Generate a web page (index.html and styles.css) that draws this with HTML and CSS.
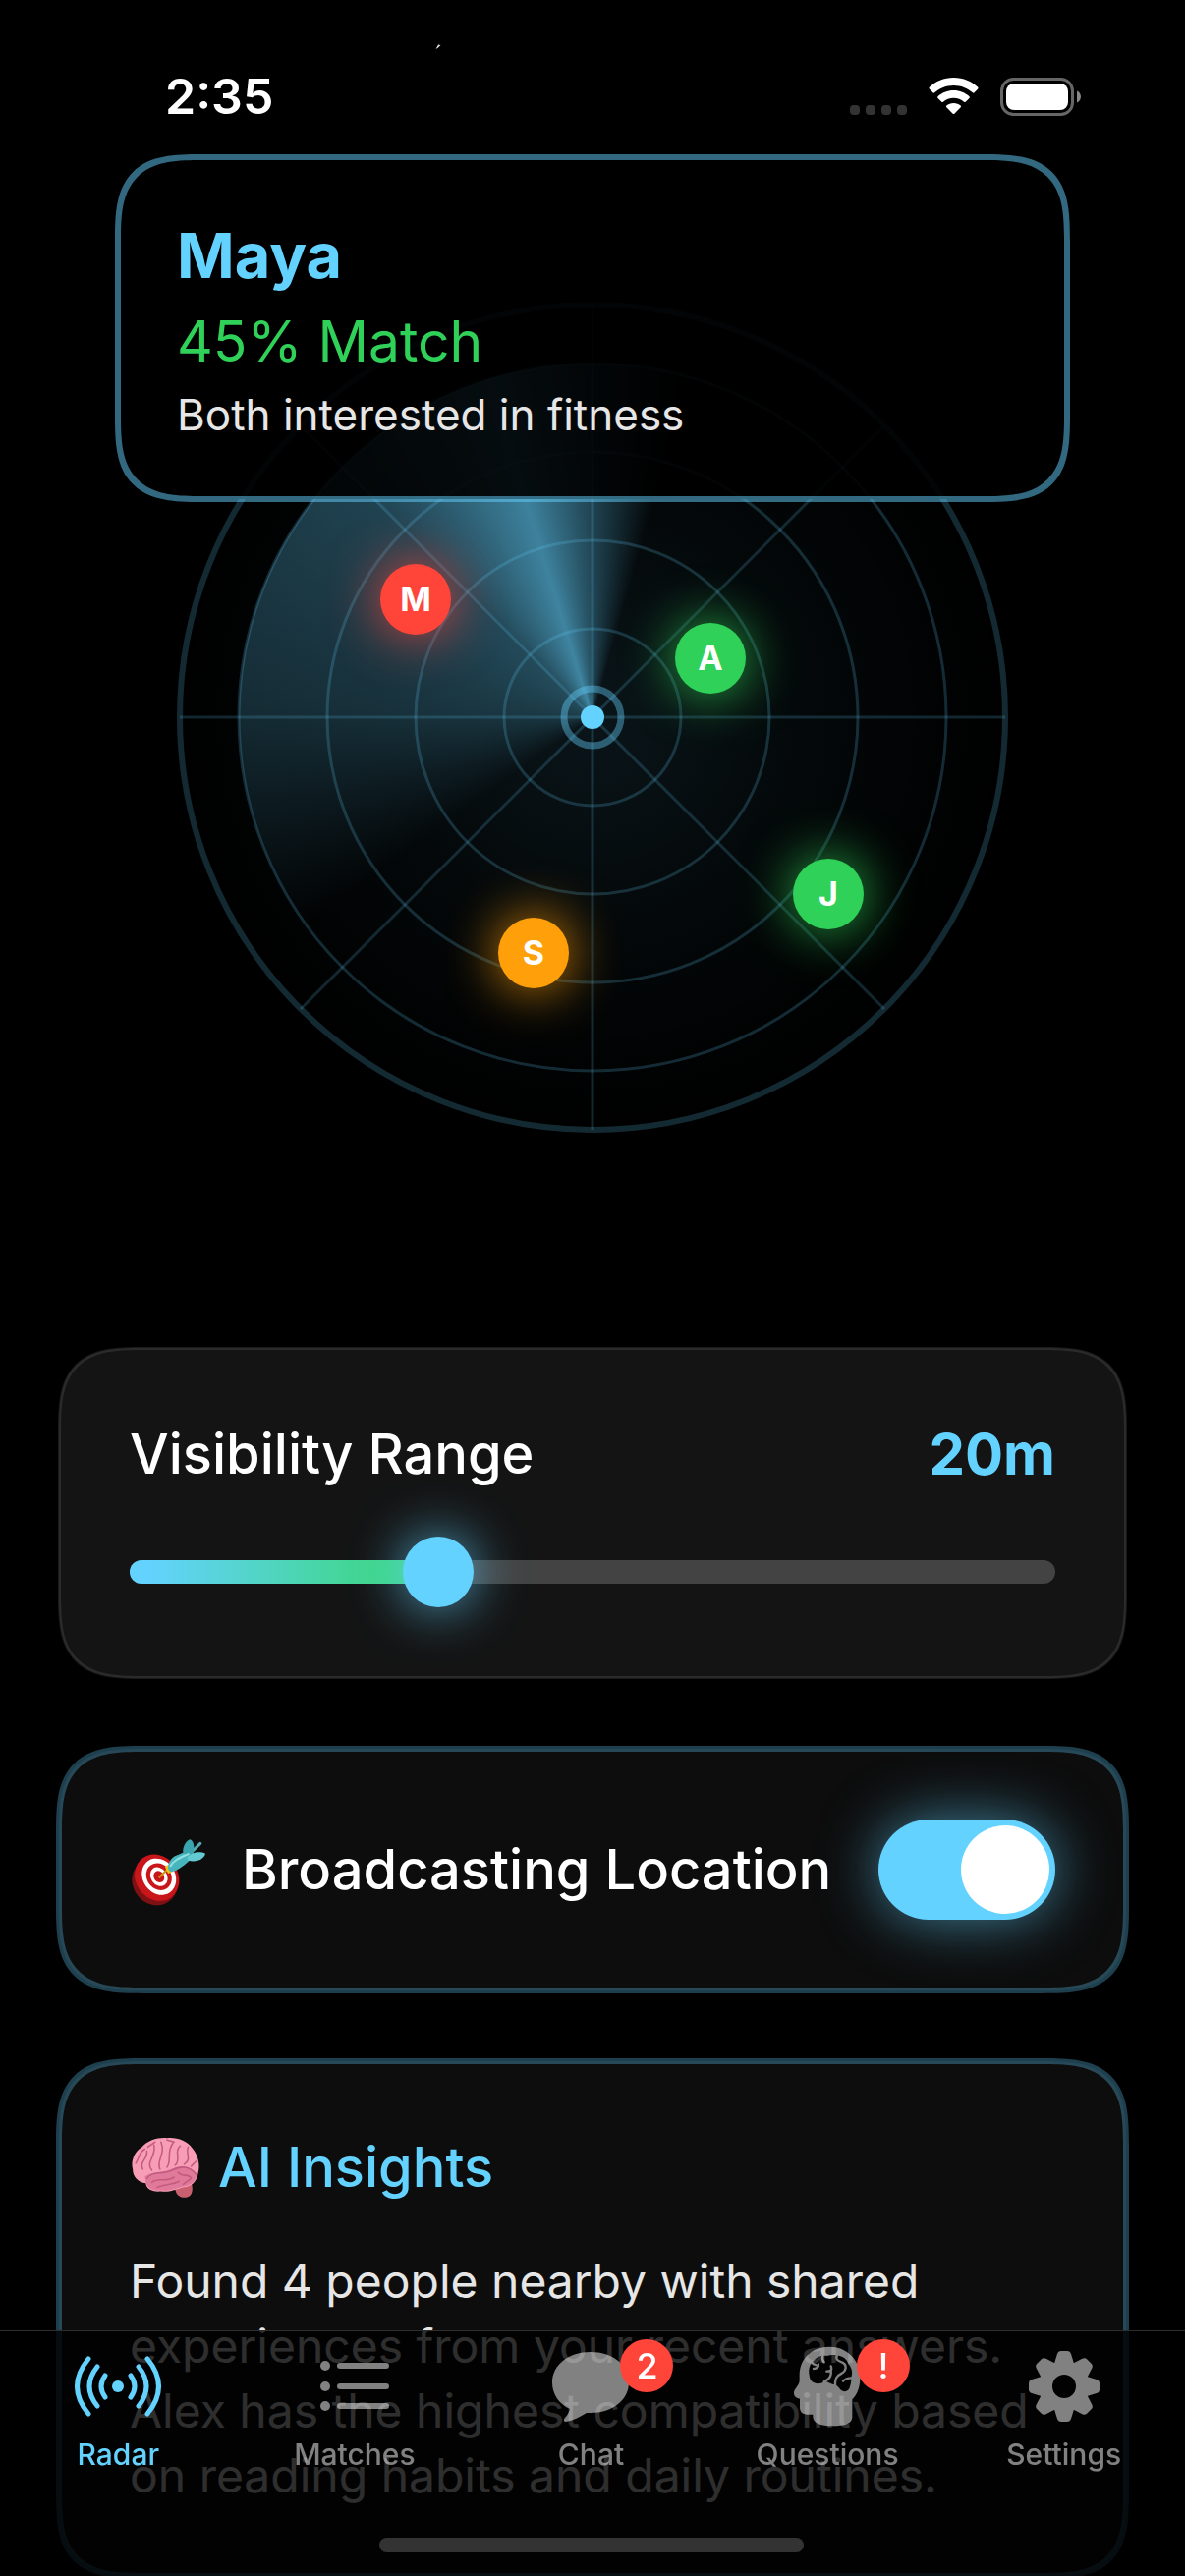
FILE: index.html
```html
<!DOCTYPE html>
<html lang="en">
<head>
<meta charset="utf-8">
<meta name="viewport" content="width=device-width, initial-scale=1">
<title>Radar</title>
<link rel="stylesheet" href="styles.css">
</head>
<body>
<header class="status-bar">
  <span class="status-time">2:35</span>
  <svg class="status-mark" viewBox="0 0 6 6" aria-hidden="true"><path d="M3 .5 5.500 1 3 3.500 .5 5Z" fill="#ddd"/></svg>
  <div class="status-icons" aria-hidden="true">
    <svg width="58" height="38" viewBox="0 0 58 38" fill="#333"><rect y="28" width="10" height="10" rx="4"/><rect x="16" y="28" width="10" height="10" rx="4"/><rect x="32" y="28" width="10" height="10" rx="4"/><rect x="48" y="28" width="10" height="10" rx="4"/></svg>
    <svg width="51" height="38" viewBox="0 0 51 38" fill="#fff"><path d="M25.500 0C35.500 0 44 3.800 50.200 9.800Q51 10.700 50.200 11.600L46.300 15.400Q45.600 16 44.800 15.300C39.600 10.600 33 7.900 25.500 7.900S11.400 10.600 6.200 15.300Q5.400 16 4.700 15.400L.8 11.600Q0 10.700.8 9.800C7 3.800 15.500 0 25.500 0Z"/><path d="M25.500 13C31.800 13 37.300 15.400 41.500 19.200Q42.300 20 41.500 20.900L37.600 24.700Q36.900 25.400 36.100 24.700C33.200 22.200 29.600 20.800 25.500 20.800S17.800 22.200 14.900 24.700Q14.100 25.400 13.400 24.700L9.500 20.900Q8.700 20 9.500 19.200C13.700 15.400 19.200 13 25.500 13Z"/><path d="M25.500 26C28.300 26 30.800 27 32.700 28.600Q33.500 29.400 32.700 30.200L26.300 36.700Q25.500 37.500 24.700 36.700L18.300 30.200Q17.500 29.400 18.300 28.600C20.200 27 22.700 26 25.500 26Z"/></svg>
    <svg width="82" height="39" viewBox="0 0 82 39"><rect x="1.500" y="1.500" width="72" height="36" rx="12" fill="none" stroke="#666" stroke-width="3"/><rect x="6" y="6" width="63" height="27" rx="8" fill="#fff"/><path d="M78 13.500C83.300 15.500 83.300 23.500 78 25.500Z" fill="#888"/></svg>
  </div>
</header>

<main class="screen">
  <section class="radar-area">
    <div class="radar">
      <div class="radar-sweep"></div>
      <svg class="radar-grid" viewBox="-423 -423 846 846" fill="none" stroke="#64d2ff" aria-hidden="true">
        <g stroke-width="3" stroke-opacity=".2">
          <circle r="90"/><circle r="180"/><circle r="270"/><circle r="360"/>
          <path d="M0-420V420M-420 0H420M-297-297 297 297M-297 297 297-297" stroke-opacity=".18"/>
        </g>
        <circle r="420" stroke-width="6" stroke-opacity=".2"/>
        <circle r="29" stroke-width="7" stroke-opacity=".4"/>
        <circle r="12" fill="#64d2ff" stroke="none"/>
      </svg>
      <button class="person person-low maya">M</button>
      <button class="person person-high alex">A</button>
      <button class="person person-high jordan">J</button>
      <button class="person person-mid sam">S</button>
    </div>
    <article class="match-card">
      <h2 class="match-name">Maya</h2>
      <p class="match-score">45% Match</p>
      <p class="match-reason">Both interested in fitness</p>
    </article>
  </section>

  <section class="card range-card">
    <div class="range-head">
      <label class="card-title" for="range">Visibility Range</label>
      <output class="range-value" for="range">20m</output>
    </div>
    <div class="slider">
      <div class="slider-track"><div class="slider-fill"></div></div>
      <input class="slider-input" id="range" type="range" min="5" max="50" value="20">
    </div>
  </section>

  <section class="card card-accent broadcast-card">
    <svg class="emoji" viewBox="0 0 76 76" aria-hidden="true">
      <ellipse cx="25" cy="50" rx="22" ry="24" transform="rotate(-35 25 50)" fill="#7f1014"/>
      <ellipse cx="27" cy="46" rx="21" ry="24" transform="rotate(-35 27 46)" fill="#c9161b"/>
      <ellipse cx="29" cy="45" rx="16" ry="19" transform="rotate(-35 29 45)" fill="#fff"/>
      <ellipse cx="29" cy="45" rx="12" ry="14" transform="rotate(-35 29 45)" fill="#c9161b"/>
      <ellipse cx="29" cy="45" rx="8" ry="10" transform="rotate(-35 29 45)" fill="#fff"/>
      <ellipse cx="29" cy="45" rx="5" ry="6" transform="rotate(-35 29 45)" fill="#c9161b"/>
      <path d="M29 46 39 36" stroke="#c99a12" stroke-width="2"/>
      <path d="M35 35 38 42 43 40 39 33Z" fill="#f2c21b"/>
      <path d="M62 20 70 12" stroke="#58aab0" stroke-width="3" stroke-linecap="round"/>
      <path d="M38 37C38 30 42 25 49 23L60 18 65 24 56 32C50 37 43 41 40 40Z" fill="#48b5bd"/>
      <path d="M53 22C52 15 56 9 60 8 65 11 64 18 62 24Z" fill="#3aa5ae"/>
      <path d="M57 26C62 20 70 20 75 22 74 28 66 31 58 29Z" fill="#62cad0"/>
      <path d="M40 35C44 28 51 26 59 22" stroke="#8fe0e4" stroke-width="2" fill="none"/>
    </svg>
    <label class="card-title broadcast-label" for="broadcast">Broadcasting Location</label>
    <input class="switch" id="broadcast" type="checkbox" role="switch" checked>
  </section>

  <section class="card card-accent insights-card">
    <h2 class="card-title insights-title">
      <svg class="emoji" viewBox="0 0 76 76" aria-hidden="true">
        <path d="M45 55C45 62 50 66 56 65 63 64 63 56 61 50L48 50Z" fill="#c9606f"/>
        <path d="M3 37C1 29 4 20 12 15 18 8 29 5 37 6 47 5 57 9 62 16 68 23 70 33 68 40 67 49 61 55 53 55 45 57 40 60 31 59 22 60 16 56 16 51 8 50 3 44 3 37Z" fill="#f79db6"/>
        <path d="M15 44C24 38 34 41 43 36 53 32 62 36 67 42 65 50 60 54 53 54 45 56 40 59 31 58 22 59 17 55 16 50Z" fill="#e07a9b"/>
        <g fill="none" stroke="#c45a80" stroke-width="1.500" stroke-linecap="round">
          <path d="M17 46C23 38 32 43 42 38S59 34 66 42"/><path d="M6 31C10 25 9 20 15 17M13 37C9 30 18 27 17 19M22 38C15 30 27 24 24 13M30 37C26 28 36 22 31 10M37 35C42 28 36 20 43 11M45 33C52 27 43 20 50 14M54 32C62 28 55 20 58 15M61 34 66 29M25 10 18 15M37 8 44 10"/><path d="M22 50C29 44 36 51 44 45M27 55C36 51 42 53 49 49M48 40C53 46 58 40 61 46M53 52 60 47"/>
        </g>
      </svg>
      <span>AI Insights</span>
    </h2>
    <p class="insights-text">Found 4 people nearby with shared experiences from your recent answers. Alex has the highest compatibility based on reading habits and daily routines.</p>
  </section>
</main>

<nav class="tab-bar">
  <a class="tab tab-active" href="#radar">
    <span class="tab-icon">
      <svg width="90" height="82" viewBox="-45 -41 90 82" fill="none" stroke="currentColor" stroke-width="5" stroke-linecap="round">
        <circle r="6" fill="currentColor" stroke="none"/>
        <path d="M-13-11Q-21 0-13 11M13-11Q21 0 13 11M-21-20Q-37 0-21 20M21-20Q37 0 21 20M-30-28Q-53 0-30 28M30-28Q53 0 30 28"/>
      </svg>
    </span>
    <span class="tab-label">Radar</span>
  </a>
  <a class="tab" href="#matches">
    <span class="tab-icon">
      <svg width="70" height="82" viewBox="0 0 70 82" fill="currentColor">
        <circle cx="5" cy="20" r="5"/><circle cx="5" cy="41" r="5"/><circle cx="5" cy="61" r="5"/>
        <rect x="17" y="17" width="53" height="6" rx="3"/><rect x="17" y="38" width="53" height="6" rx="3"/><rect x="17" y="58" width="53" height="6" rx="3"/>
      </svg>
    </span>
    <span class="tab-label">Matches</span>
  </a>
  <a class="tab" href="#chat">
    <span class="tab-icon">
      <svg width="78" height="82" viewBox="0 0 78 82" fill="currentColor"><path d="M39 6C61 6 78 19 78 37S61 68 39 68L35 68C28 72 21 76 14 77 12 77 11 75 13 73 15 71 17 68 18 64 7 59 0 49 0 37 0 19 17 6 39 6Z"/></svg>
      <span class="badge">2</span>
    </span>
    <span class="tab-label">Chat</span>
  </a>
  <a class="tab" href="#questions">
    <span class="tab-icon">
      <svg width="68" height="82" viewBox="90 53 204 246">
        <mask id="head-mask" maskUnits="userSpaceOnUse" x="80" y="50" width="220" height="250">
          <rect x="80" y="50" width="220" height="250" fill="#fff"/>
          <path d="M137 142C133 125 138 108 150 98 160 84 178 80 190 83 205 78 222 80 232 84 245 87 254 98 256 108 267 118 270 135 265 148 266 162 262 176 258 184 252 194 238 193 232 186 227 180 224 174 215 171 205 170 195 162 185 160 175 169 155 170 146 162 140 157 138 150 137 142Z" fill="#000"/>
          <g fill="none" stroke="#fff" stroke-width="7" stroke-linecap="round"><path d="M146 104C150 112 155 108 160 112M150 122C160 122 166 116 165 108M178 84C176 92 178 98 182 102M203 114C208 128 200 130 190 130M203 127C206 150 192 156 182 162M222 80C216 96 226 98 236 102 254 110 250 128 236 136 220 144 214 154 216 176M268 150C256 150 246 152 240 160"/></g>
        </mask>
        <path mask="url(#head-mask)" fill="currentColor" d="M107 140C108 88 148 55 198 55 252 55 292 95 292 148 292 178 284 200 268 216V270C268 290 245 297 208 297 170 297 148 288 148 268V262H132C115 262 108 254 108 240V214C96 212 89 206 90 194 92 182 107 172 107 158Z"/>
      </svg>
      <span class="badge">!</span>
    </span>
    <span class="tab-label">Questions</span>
  </a>
  <a class="tab" href="#settings">
    <span class="tab-icon">
      <svg width="72" height="82" viewBox="-36 -41 72 82">
        <mask id="gear-mask" maskUnits="userSpaceOnUse" x="-40" y="-40" width="80" height="80">
          <g fill="#fff">
            <circle r="26"/>
            <path id="tooth" d="M-11-20-7-33Q-6-36-3-36H3Q6-36 7-33L11-20Z"/>
            <use href="#tooth" transform="rotate(45)"/><use href="#tooth" transform="rotate(90)"/><use href="#tooth" transform="rotate(135)"/><use href="#tooth" transform="rotate(180)"/><use href="#tooth" transform="rotate(225)"/><use href="#tooth" transform="rotate(270)"/><use href="#tooth" transform="rotate(315)"/>
          </g>
          <circle r="12" fill="#000"/>
        </mask>
        <rect x="-36" y="-36" width="72" height="72" fill="currentColor" mask="url(#gear-mask)"/>
      </svg>
    </span>
    <span class="tab-label">Settings</span>
  </a>
  <div class="home-indicator"></div>
</nav>
</body>
</html>
```
FILE: styles.css
```css
:root {
  --accent: #64d2ff;
  --green: #30d158;
  --orange: #ff9f0a;
  --red: #ff453a;
}

* {
  box-sizing: border-box;
}

body {
  margin: 0;
  background: #000;
  color: #fff;
  font-family: Inter, "Liberation Sans", sans-serif;
}

h2,
p {
  margin: 0;
}

svg {
  display: block;
}

/* Status bar */
.status-bar {
  position: relative;
  display: flex;
  align-items: center;
  justify-content: space-between;
  height: 160px;
  padding: 68px 106px 32px 168px;
}

.status-time {
  font-size: 50px;
  font-weight: 600;
  line-height: 60px;
}

.status-mark {
  position: absolute;
  top: 45px;
  left: 443px;
  width: 6px;
  height: 6px;
}

.status-icons {
  display: flex;
  align-items: center;
  gap: 22px;
}

/* Radar */
.screen {
  padding: 0 60px;
}

.radar-area {
  position: relative;
  padding: 147px 0 219px;
}

.radar {
  position: relative;
  width: 846px;
  max-width: 100%;
  aspect-ratio: 1;
  margin: 0 auto;
  border-radius: 50%;
  background: radial-gradient(closest-side, rgba(100, 210, 255, .1), rgba(100, 210, 255, .04) 50%, transparent);
}

.radar-sweep {
  position: absolute;
  inset: 63px;
  border-radius: 50%;
  background: conic-gradient(from 234deg,
    transparent,
    rgba(100, 210, 255, .2) 38deg,
    rgba(100, 210, 255, .3) 80deg,
    rgba(100, 210, 255, .6) 109deg,
    transparent 142deg);
}

.radar-grid {
  position: absolute;
  inset: 0;
  width: 100%;
  height: 100%;
}

.person {
  position: absolute;
  width: 72px;
  height: 72px;
  padding: 0;
  border: 0;
  border-radius: 50%;
  color: #fff;
  font: inherit;
  font-size: 34px;
  font-weight: 700;
  line-height: 72px;
  text-align: center;
  transform: translate(-50%, -50%);
}

.person-high {
  background: var(--green);
  box-shadow: 0 0 54px rgba(48, 209, 88, .9);
}

.person-mid {
  background: var(--orange);
  box-shadow: 0 0 54px rgba(255, 159, 10, .9);
}

.person-low {
  background: var(--red);
  box-shadow: 0 0 54px rgba(255, 69, 58, .9);
}

/* Distance from the radar's centre */
.maya { left: calc(50% - 180px); top: calc(50% - 120px); }
.alex { left: calc(50% + 120px); top: calc(50% - 60px); }
.jordan { left: calc(50% + 240px); top: calc(50% + 180px); }
.sam { left: calc(50% - 60px); top: calc(50% + 240px); }

.match-card {
  position: absolute;
  top: 0;
  left: 60px;
  right: 60px;
  display: flex;
  flex-direction: column;
  gap: 12px;
  padding: 60px;
  border-radius: 60px;
  background: rgba(0, 0, 0, .9);
  outline: 6px solid rgba(100, 210, 255, .5);
  outline-offset: -3px;
}

.match-name {
  color: var(--accent);
  font-size: 63px;
  font-weight: 700;
  line-height: 80px;
}

.match-score {
  color: var(--green);
  font-size: 57px;
  line-height: 72px;
}

.match-reason {
  color: #e6e6e6;
  font-size: 44px;
  line-height: 52px;
}

/* Cards */
.card {
  padding: 72px;
  border-radius: 64px;
  background: #0d0d0d;
}

.card + .card {
  margin-top: 72px;
}

.card-accent {
  outline: 6px solid rgba(100, 210, 255, .3);
  outline-offset: -3px;
}

.card-title {
  font-size: 56px;
  font-weight: 500;
  line-height: 72px;
}

.range-card {
  display: flex;
  flex-direction: column;
  gap: 48px;
  background: #141414;
  outline: 3px solid rgba(255, 255, 255, .1);
  outline-offset: -2px;
}

/* Continuous corners where the browser can draw them */
@supports (corner-shape: superellipse(1.6)) {
  .card,
  .match-card {
    border-radius: 86px;
    corner-shape: superellipse(1.6);
  }
}

.range-head {
  display: flex;
  justify-content: space-between;
}

.range-value {
  color: var(--accent);
  font-size: 58px;
  font-weight: 700;
  line-height: 72px;
}

.slider {
  display: grid;
  align-items: center;
}

.slider-track,
.slider-input {
  grid-area: 1 / 1;
}

.slider-track {
  height: 24px;
  overflow: hidden;
  border-radius: 12px;
  background: #434343;
}

.slider-fill {
  width: 33.333%;
  height: 100%;
  background: linear-gradient(90deg, var(--accent) 5%, #3fd68a 80%);
}

/* Runs half a thumb past the track on both ends */
.slider-input {
  appearance: none;
  height: 72px;
  margin: 0 -36px;
  background: none;
}

.slider-input::-webkit-slider-thumb {
  appearance: none;
  width: 72px;
  height: 72px;
  border-radius: 50%;
  background: var(--accent);
  box-shadow: 0 0 54px rgba(100, 210, 255, .8);
}

.broadcast-card {
  display: flex;
  align-items: center;
}

.emoji {
  flex: none;
  width: 78px;
  height: 78px;
}

.broadcast-label {
  flex: 1;
  margin-left: 36px;
  white-space: nowrap;
}

.switch {
  appearance: none;
  display: flex;
  justify-content: flex-end;
  width: 180px;
  height: 102px;
  margin: 0;
  padding: 6px;
  border-radius: 51px;
  background: var(--accent);
  box-shadow: 0 0 60px rgba(100, 210, 255, .6);
}

.switch::before {
  content: "";
  width: 90px;
  height: 90px;
  border-radius: 50%;
  background: #fff;
}

.insights-card {
  display: flex;
  flex-direction: column;
  gap: 47px;
  padding-bottom: 69px;
}

.insights-title {
  display: flex;
  gap: 12px;
  height: 72px;
  color: var(--accent);
}

.insights-text {
  color: #e6e6e6;
  font-size: 48px;
  line-height: 66px;
}

/* Tab bar */
.tab-bar {
  position: fixed;
  left: 0;
  right: 0;
  bottom: 0;
  display: grid;
  grid-template-columns: repeat(5, 1fr);
  justify-items: center;
  padding: 15px 3px 24px 0;
  border-top: 1px solid #2e2e2e;
  background: rgba(0, 0, 0, .8);
}

.tab {
  display: flex;
  flex-direction: column;
  align-items: center;
  gap: 10px;
  color: rgba(255, 255, 255, .5);
  text-decoration: none;
}

.tab-active {
  color: var(--accent);
}

.tab-icon {
  position: relative;
}

.badge {
  position: absolute;
  top: -7px;
  left: calc(50% + 30px);
  width: 54px;
  height: 54px;
  border-radius: 50%;
  background: var(--red);
  color: #fff;
  font-size: 36px;
  font-weight: 500;
  line-height: 54px;
  text-align: center;
}

.tab-label {
  font-size: 30px;
  font-weight: 500;
  line-height: 36px;
}

.home-indicator {
  grid-column: 1 / -1;
  width: 432px;
  height: 15px;
  margin-top: 67px;
  border-radius: 8px;
  background: #333;
}
```
